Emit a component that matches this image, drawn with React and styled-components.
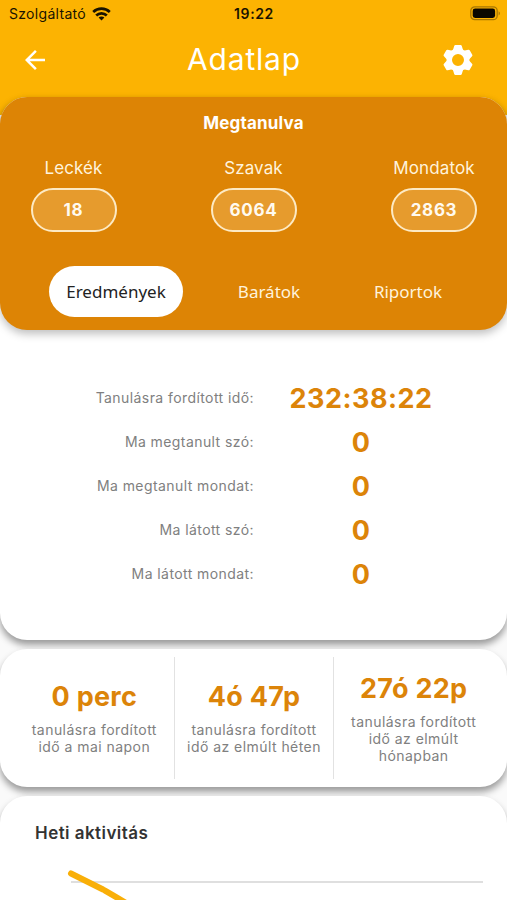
import React from "react";
import styled, { createGlobalStyle } from "styled-components";
import { MdArrowBack } from "react-icons/md";

const results = [
  { label: "Tanulásra fordított idő:", value: "232:38:22" },
  { label: "Ma megtanult szó:", value: "0" },
  { label: "Ma megtanult mondat:", value: "0" },
  { label: "Ma látott szó:", value: "0" },
  { label: "Ma látott mondat:", value: "0" },
];

const learned = [
  { label: "Leckék", value: "18" },
  { label: "Szavak", value: "6064" },
  { label: "Mondatok", value: "2863" },
];

const GearIcon = () => (
  <svg width="32" height="32" viewBox="-16 -16 32 32" fill="white">
    <circle r="8.7" fill="none" stroke="white" strokeWidth="5.4" />
    {[0, 60, 120, 180, 240, 300].map((angle) => (
      <path
        key={angle}
        transform={`rotate(${angle})`}
        d="M-5.2 -9.6L-3.8 -14Q-3.5 -15 -2.6 -15H2.6Q3.5 -15 3.8 -14L5.2 -9.6Z"
      />
    ))}
  </svg>
);

const App = () => {
  return (
    <Screen>
      <GlobalStyle />
      <Header>
        <StatusBar>
          <Carrier>
            Szolgáltató
            <svg width="19" height="14" viewBox="0 0 19 14" fill="none" stroke="#1a1300" strokeWidth="2.7">
              <path d="M1.2 5C5.8.6 13.2.6 17.8 5" />
              <path d="M4.2 8.5C7.2 5.6 11.8 5.6 14.8 8.5" />
              <path d="M9.5 13.4L6.6 10.6C8.2 9 10.8 9 12.4 10.6Z" fill="#1a1300" stroke="none" />
            </svg>
          </Carrier>
          <Clock>19:22</Clock>
          <Battery>
            <svg width="31" height="15" viewBox="0 0 31 15">
              <rect x="0.8" y="0.8" width="26.4" height="12.9" rx="4" fill="none" stroke="#a77703" strokeWidth="1.3" />
              <rect x="2.7" y="2.6" width="22.4" height="9.3" rx="2.4" fill="#0a0700" />
              <path d="M28.6 5.2C30.4 6 30.4 8.6 28.6 9.4Z" fill="#a77703" />
            </svg>
          </Battery>
        </StatusBar>
        <NavBar>
          <MdArrowBack size={30} />
          <Title>Adatlap</Title>
          <GearIcon />
        </NavBar>
      </Header>
      <ProfileCard>
        <Summary>
          <SummaryTitle>Megtanulva</SummaryTitle>
          <LearnedRow>
            {learned.map((item) => (
              <Learned key={item.label}>
                <span>{item.label}</span>
                <Pill>{item.value}</Pill>
              </Learned>
            ))}
          </LearnedRow>
          <Tabs>
            <Tab $active>Eredmények</Tab>
            <Tab>Barátok</Tab>
            <Tab>Riportok</Tab>
          </Tabs>
        </Summary>
        <Results>
          {results.map((item) => (
            <Result key={item.label}>
              <ResultLabel>{item.label}</ResultLabel>
              <ResultValue>{item.value}</ResultValue>
            </Result>
          ))}
        </Results>
      </ProfileCard>
      <TimeCard>
        <Time>
          <TimeValue>0 perc</TimeValue>
          <TimeText>
            tanulásra fordított
            <br />
            idő a mai napon
          </TimeText>
        </Time>
        <Time>
          <TimeValue>4ó 47p</TimeValue>
          <TimeText>
            tanulásra fordított
            <br />
            idő az elmúlt héten
          </TimeText>
        </Time>
        <Time>
          <TimeValue>27ó 22p</TimeValue>
          <TimeText>
            tanulásra fordított
            <br />
            idő az elmúlt
            <br />
            hónapban
          </TimeText>
        </Time>
      </TimeCard>
      <ActivityCard>
        <ActivityTitle>Heti aktivitás</ActivityTitle>
        <svg width="507" height="40" viewBox="0 0 507 40">
          <path d="M71 21H483" stroke="#d5d5d5" strokeWidth="1.5" />
          <path d="M71 12.5L103 28.5C116 36 130 44 142 52" fill="none" stroke="#f9af08" strokeWidth="6" strokeLinecap="round" />
        </svg>
      </ActivityCard>
    </Screen>
  );
};

export default App;

const GlobalStyle = createGlobalStyle`
  body {
    margin: 0;
    overflow: hidden;
  }
`;

const Screen = styled.div`
  display: flex;
  flex-direction: column;
  width: 507px;
  height: 900px;
  overflow: hidden;
  background: linear-gradient(#fcb302 115px, #fafafa 115px);
  font-family: Inter, "Liberation Sans", sans-serif;
  color: #808080;
`;

const Header = styled.div`
  flex: none;
  height: 97px;
`;

const StatusBar = styled.div`
  display: grid;
  grid-template-columns: 1fr auto 1fr;
  align-items: center;
  height: 27px;
  padding: 0 6px 0 9px;
  color: #1a1300;
`;

const Carrier = styled.div`
  display: flex;
  align-items: center;
  gap: 6px;
  font-size: 14px;
  letter-spacing: 0.3px;
`;

const Clock = styled.div`
  padding-right: 2px;
  font-size: 14px;
  font-weight: 600;
  letter-spacing: 0.6px;
`;

const Battery = styled.div`
  display: flex;
  justify-content: flex-end;
`;

const NavBar = styled.div`
  display: flex;
  justify-content: space-between;
  align-items: center;
  height: 65px;
  padding: 0 33px 0 20px;
  color: white;
`;

const Title = styled.div`
  padding: 0 4px 1px 0;
  font-size: 30px;
  letter-spacing: 0.8px;
`;

const ProfileCard = styled.div`
  flex: none;
  height: 543px;
  border-radius: 27px;
  background-color: white;
  box-shadow: 0 5px 7px rgba(0, 0, 0, 0.38);
`;

const Summary = styled.div`
  display: flex;
  flex-direction: column;
  align-items: center;
  box-sizing: border-box;
  height: 233px;
  padding-top: 15px;
  border-radius: 27px;
  background-color: #dd8405;
  box-shadow: 0 4px 8px rgba(0, 0, 0, 0.25);
  color: white;
`;

const SummaryTitle = styled.div`
  font-size: 17px;
  font-weight: 700;
  line-height: 22px;
  letter-spacing: 0.2px;
`;

const LearnedRow = styled.div`
  display: flex;
  justify-content: space-between;
  box-sizing: border-box;
  width: 100%;
  padding: 23px 23px 0 24px;
`;

const Learned = styled.div`
  display: flex;
  flex-direction: column;
  align-items: center;
  width: 100px;
  gap: 9px;
  font-size: 17px;
  line-height: 22px;
  letter-spacing: 0.1px;
  color: #fff3dc;

  &:first-child {
    width: 99px;
  }
`;

const Pill = styled.div`
  display: flex;
  justify-content: center;
  align-items: center;
  box-sizing: border-box;
  width: 86px;
  height: 44px;
  border: 2px solid #fdeac4;
  border-radius: 22px;
  background-color: #e69b2d;
  font-weight: 700;
  letter-spacing: 0.7px;
  color: #fffaf0;
`;

const Tabs = styled.div`
  display: flex;
  align-self: stretch;
  gap: 23px;
  margin-top: 34px;
  padding-left: 49px;
`;

const Tab = styled.div`
  display: flex;
  justify-content: center;
  align-items: center;
  box-sizing: border-box;
  width: ${(props) => (props.$active ? "134px" : "116px")};
  height: 51px;
  padding-left: ${(props) => (props.$active ? 0 : "10px")};
  border-radius: 26px;
  background-color: ${(props) => (props.$active ? "white" : "transparent")};
  font-family: "Noto Sans", sans-serif;
  font-size: 17px;
  color: ${(props) => (props.$active ? "#222" : "#fff3dc")};
`;

const Results = styled.div`
  padding-top: 45px;
`;

const Result = styled.div`
  display: grid;
  grid-template-columns: 254px 214px;
  align-items: center;
  height: 44px;
`;

const ResultLabel = styled.div`
  text-align: right;
  font-size: 14px;
  letter-spacing: 0.42px;
`;

const ResultValue = styled.div`
  padding-top: 2px;
  text-align: center;
  font-size: 27px;
  font-weight: 700;
  letter-spacing: 0.5px;
  color: #dc8409;
`;

const TimeCard = styled.div`
  display: flex;
  flex: none;
  box-sizing: border-box;
  height: 138px;
  margin-top: 9px;
  padding: 8px 14px 8px 15px;
  border-radius: 27px;
  background-color: white;
  box-shadow: 0 5px 7px rgba(0, 0, 0, 0.38);
`;

const Time = styled.div`
  display: flex;
  flex: 1;
  flex-direction: column;
  justify-content: center;
  align-items: center;
  padding-bottom: 1px;
  text-align: center;

  & + & {
    border-left: 1px solid #e2e2e2;
  }
`;

const TimeValue = styled.div`
  font-size: 27px;
  font-weight: 700;
  line-height: 34px;
  letter-spacing: 0.3px;
  color: #dc8409;
`;

const TimeText = styled.div`
  margin-top: 7px;
  font-size: 14px;
  line-height: 17px;
  letter-spacing: 0.45px;
`;

const ActivityCard = styled.div`
  flex: none;
  height: 200px;
  margin-top: 9px;
  border-radius: 27px;
  background-color: white;
  box-shadow: 0 5px 7px rgba(0, 0, 0, 0.38);
`;

const ActivityTitle = styled.div`
  height: 39px;
  padding: 26px 0 0 35px;
  font-size: 17px;
  font-weight: 600;
  line-height: 22px;
  letter-spacing: 0.45px;
  color: #333;
`;
